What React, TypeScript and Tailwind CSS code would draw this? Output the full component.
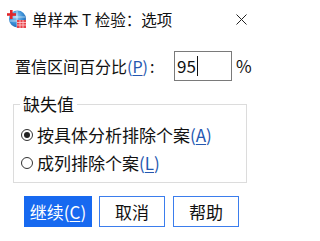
import React from "react";

const font = { fontFamily: '"Noto Sans CJK SC", "Noto Sans", sans-serif' };

function AppIcon() {
  return (
    <svg width="20" height="20" viewBox="0 0 20 20">
      <defs>
        <radialGradient id="g" cx="0.4" cy="0.35" r="0.7">
          <stop offset="0" stopColor="#9fd0f5" />
          <stop offset="0.6" stopColor="#3a8fd6" />
          <stop offset="1" stopColor="#1d5fa8" />
        </radialGradient>
      </defs>
      <circle cx="10.5" cy="10" r="8.5" fill="url(#g)" />
      <path d="M4 8h14M3 12h15M10 2v16" stroke="#ffffff" strokeWidth="0.8" opacity="0.7" />
      <rect x="3" y="1" width="2.6" height="9" fill="#e0262b" />
      <rect x="0" y="4.2" width="9" height="2.6" fill="#e0262b" />
      <rect x="10" y="11" width="9" height="8" fill="#e8434a" />
      <path d="M10 13.5h9M10 16h9M13 11v8M16 11v8" stroke="#ffd2d4" strokeWidth="0.8" />
    </svg>
  );
}

function Mn({ c, white }: { c: string; white?: boolean }) {
  return (
    <span className={white ? "text-white" : "text-[#2457b0]"}>
      (<span className="underline underline-offset-2">{c}</span>)
    </span>
  );
}

function Radio({ checked, label, m }: { checked?: boolean; label: string; m: string }) {
  return (
    <div className="flex items-center h-[24px]">
      <span className="w-[12px] h-[12px] rounded-full border border-[#333333] flex items-center justify-center ml-[7px] mr-[4px] shrink-0">
        {checked && <span className="w-[6px] h-[6px] rounded-full bg-[#222222]" />}
      </span>
      <span className="text-[17px] leading-[24px] text-[#111111] whitespace-nowrap">
        {label}
        <Mn c={m} />
      </span>
    </div>
  );
}

export default function App() {
  return (
    <div className="w-[259px] h-[241px] bg-white relative overflow-hidden" style={font}>
      <div className="h-[38px] flex items-center pl-[7px] pr-[12px]">
        <AppIcon />
        <span className="ml-[5px] text-[15.5px] leading-[22px] text-[#111111]">单样本 T 检验：选项</span>
        <svg className="ml-auto" width="11" height="11" viewBox="0 0 11 11">
          <path d="M0.5 0.5L10.5 10.5M10.5 0.5L0.5 10.5" stroke="#222222" strokeWidth="1" />
        </svg>
      </div>
      <div className="mt-[13px] flex items-center h-[30px] pl-[15px]">
        <span className="w-[159px] text-[16px] leading-[24px] text-[#111111] whitespace-nowrap">
          置信区间百分比<Mn c="P" />
          <span className="ml-[2px]">:</span>
        </span>
        <div className="w-[58px] h-[30px] border border-[#7a7a7a] flex items-center pl-[2px] text-[17px] leading-[24px] text-[#111111]">
          95<span className="w-px h-[20px] bg-[#111111] ml-px" />
        </div>
        <span className="ml-[4px] text-[17px] leading-[24px] text-[#111111]">%</span>
      </div>
      <fieldset className="mt-[11px] ml-[13px] w-[234px] h-[91px] border border-[#dcdcdc] px-0 pb-0 pt-[7px]">
        <legend className="ml-[6px] px-[3px] text-[17px] leading-[24px] text-[#111111]">缺失值</legend>
        <Radio checked label="按具体分析排除个案" m="A" />
        <div className="h-[4px]" />
        <Radio label="成列排除个案" m="L" />
      </fieldset>
      <div className="mt-[13px] flex pl-[24px] gap-[7px]">
        <div className="w-[68px] h-[31px] bg-[#1769f0] flex items-center justify-center text-[17px] leading-[24px] text-white">
          继续<Mn c="C" white />
        </div>
        <div className="w-[66px] h-[31px] border border-[#3b7ded] flex items-center justify-center text-[17px] leading-[24px] text-[#111111]">
          取消
        </div>
        <div className="w-[66px] h-[31px] border border-[#3b7ded] flex items-center justify-center text-[17px] leading-[24px] text-[#111111] ml-[1px]">
          帮助
        </div>
      </div>
    </div>
  );
}
